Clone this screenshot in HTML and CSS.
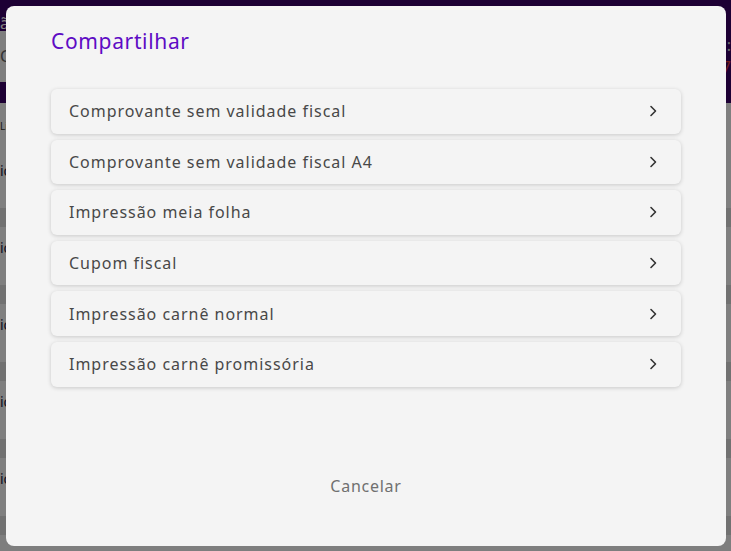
FILE: index.html
```html
<!DOCTYPE html>
<html lang="pt-BR">
<head>
<meta charset="utf-8">
<title>Compartilhar</title>
<link rel="stylesheet" href="styles.css">
</head>
<body>
<div class="app">
  <header class="app-header">
    <div class="header-left">
      <div class="header-title">ã</div>
      <div class="header-field">C</div>
    </div>
    <div class="header-right">
      <div class="header-total">1:</div>
      <div class="header-value">7</div>
    </div>
  </header>
  <div class="app-sub">Li</div>
  <ul class="app-list">
    <li>io</li>
    <li>io</li>
    <li>io</li>
    <li>io</li>
    <li>io</li>
  </ul>
</div>

<div class="overlay">
  <div class="modal" role="dialog" aria-labelledby="modal-title">
    <h2 class="modal-title" id="modal-title">Compartilhar</h2>
    <ul class="options">
      <li class="option"><span>Comprovante sem validade fiscal</span><svg class="chev" viewBox="0 0 8 12" width="8" height="12"><path d="M2 1.5 L6.5 6 L2 10.5" fill="none" stroke="#333" stroke-width="1.6" stroke-linecap="round" stroke-linejoin="round"/></svg></li>
      <li class="option"><span>Comprovante sem validade fiscal A4</span><svg class="chev" viewBox="0 0 8 12" width="8" height="12"><path d="M2 1.5 L6.5 6 L2 10.5" fill="none" stroke="#333" stroke-width="1.6" stroke-linecap="round" stroke-linejoin="round"/></svg></li>
      <li class="option"><span>Impressão meia folha</span><svg class="chev" viewBox="0 0 8 12" width="8" height="12"><path d="M2 1.5 L6.5 6 L2 10.5" fill="none" stroke="#333" stroke-width="1.6" stroke-linecap="round" stroke-linejoin="round"/></svg></li>
      <li class="option"><span>Cupom fiscal</span><svg class="chev" viewBox="0 0 8 12" width="8" height="12"><path d="M2 1.5 L6.5 6 L2 10.5" fill="none" stroke="#333" stroke-width="1.6" stroke-linecap="round" stroke-linejoin="round"/></svg></li>
      <li class="option"><span>Impressão carnê normal</span><svg class="chev" viewBox="0 0 8 12" width="8" height="12"><path d="M2 1.5 L6.5 6 L2 10.5" fill="none" stroke="#333" stroke-width="1.6" stroke-linecap="round" stroke-linejoin="round"/></svg></li>
      <li class="option"><span>Impressão carnê promissória</span><svg class="chev" viewBox="0 0 8 12" width="8" height="12"><path d="M2 1.5 L6.5 6 L2 10.5" fill="none" stroke="#333" stroke-width="1.6" stroke-linecap="round" stroke-linejoin="round"/></svg></li>
    </ul>
    <button class="cancel" type="button">Cancelar</button>
  </div>
</div>
</body>
</html>
```

FILE: styles.css
```css
* { box-sizing: border-box; }
html, body { margin: 0; padding: 0; }
body {
  width: 731px;
  height: 551px;
  overflow: hidden;
  font-family: "Noto Sans", "Open Sans", sans-serif;
  background: #fdfdfd;
  position: relative;
}

/* background app */
.app { width: 100%; height: 100%; display: flex; flex-direction: column; }
.app-header {
  height: 103px;
  background: #3b0068;
  display: flex;
  justify-content: space-between;
}
.header-left { display: flex; flex-direction: column; width: 120px; }
.header-title { height: 31px; color: #fff; font-size: 16px; line-height: 31px; padding-top: 8px; }
.header-field { height: 51px; background: #fcfcfc; color: #666; font-size: 16px; line-height: 51px; }
.header-right { display: flex; flex-direction: column; align-items: flex-end; width: 40px; padding-top: 34px; }
.header-total { color: #ddd; font-size: 16px; line-height: 22px; }
.header-value { color: #e53935; font-size: 16px; line-height: 22px; }
.app-sub { height: 47px; line-height: 47px; font-size: 10px; color: #333; background: #fff; }
.app-list { list-style: none; margin: 0; padding: 0; }
.app-list li {
  height: 77px;
  line-height: 42px;
  border-bottom: 19px solid #e2e2e2;
  background: #fff;
  color: #224;
  font-size: 14px;
}

/* overlay & modal */
.overlay {
  position: absolute;
  inset: 0;
  background: rgba(0, 0, 0, 0.5);
  padding: 6px 5px 5px 6px;
  display: flex;
}
.modal {
  flex: 1;
  background: #f4f4f4;
  border-radius: 8px;
  padding: 21px 45px 0 45px;
  display: flex;
  flex-direction: column;
}
.modal-title {
  margin: 0;
  font-size: 21px;
  font-weight: 400;
  color: #5e0bc4;
  line-height: 28px;
  letter-spacing: 0.65px;
}
.options {
  list-style: none;
  margin: 34px 0 0 0;
  padding: 0;
  display: flex;
  flex-direction: column;
  gap: 6px;
}
.option {
  height: 44.6px;
  background: #f4f4f4;
  border-radius: 6px;
  box-shadow: 0 1px 4px rgba(0, 0, 0, 0.18);
  display: flex;
  align-items: center;
  justify-content: space-between;
  padding: 0 24px 0 18px;
  font-size: 16px;
  color: #484848;
  letter-spacing: 0.97px;
}
.chev { display: block; }
.cancel {
  margin: 84px auto 0;
  border: 0;
  background: transparent;
  font-family: inherit;
  font-size: 16px;
  color: #707070;
  padding: 4px 8px;
  letter-spacing: 0.75px;
  cursor: pointer;
}
```
